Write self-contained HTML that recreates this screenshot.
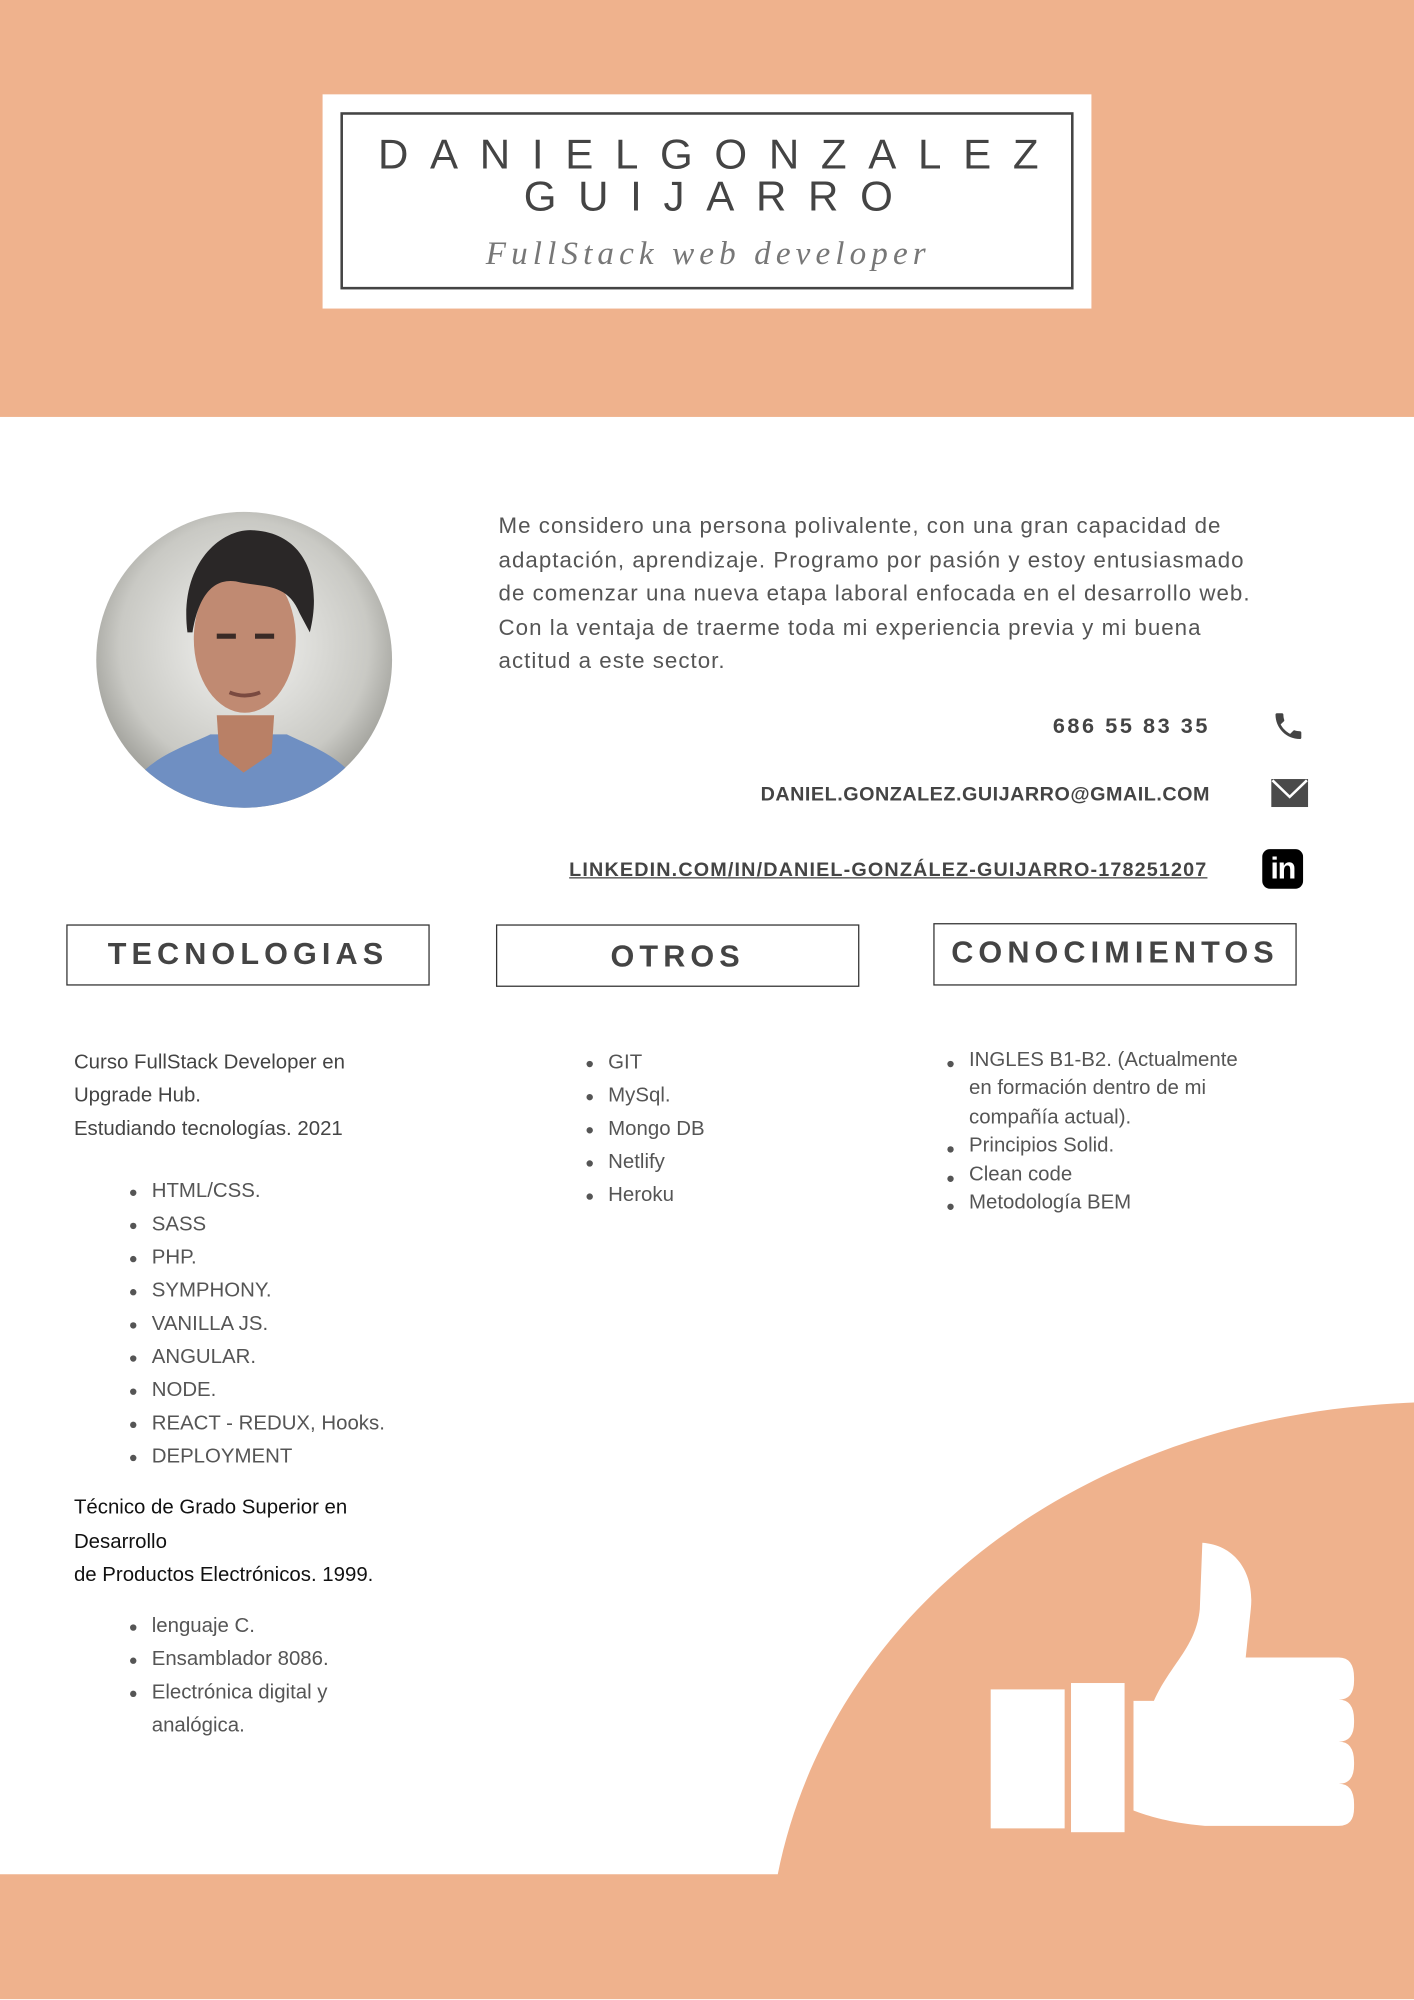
<!DOCTYPE html>
<html><head><meta charset="utf-8"><style>
html,body{margin:0;padding:0;background:#fff;}
body{width:1414px;height:2000px;overflow:hidden;position:relative;}
#s{position:absolute;left:0;top:0;width:1109px;height:1568px;transform:scale(1.27502);transform-origin:0 0;font-family:"Liberation Sans",sans-serif;color:#555;}
.a{position:absolute;}
.name{left:267px;width:577px;text-align:center;font-size:33px;letter-spacing:17px;color:#444;line-height:34px;padding-left:17px;box-sizing:border-box;}
.box{border:1.5px solid #333;box-sizing:border-box;text-align:center;font-weight:bold;font-size:24px;letter-spacing:4px;color:#444;line-height:46px;}
.t{font-size:16px;color:#444;line-height:26px;}
ul{margin:0;padding:0;list-style:none;}
li{position:relative;}
li:before{content:"";position:absolute;left:-17px;top:11px;width:5px;height:5px;border-radius:50%;background:#555;}
</style></head><body><div id="s">
<div class="a" style="left:0;top:0;width:1109px;height:327px;background:#EFB28D"></div>
<div class="a" style="left:253px;top:74px;width:603px;height:168px;background:#fff"></div>
<div class="a" style="left:267px;top:88px;width:575px;height:139px;border:2px solid #444;box-sizing:border-box"></div>
<div class="a name" style="top:104px">DANIELGONZALEZ</div>
<div class="a name" style="top:137px">GUIJARRO</div>
<div class="a" style="left:267px;width:577px;top:184px;text-align:center;font-family:'Liberation Serif',serif;font-style:italic;font-size:26px;letter-spacing:4px;color:#777">FullStack web developer</div>

<svg class="a" style="left:75px;top:401px" width="233" height="233" viewBox="0 0 233 233">
<defs><clipPath id="c"><circle cx="116.5" cy="116.5" r="116"/></clipPath>
<radialGradient id="g" cx="0.5" cy="0.45" r="0.6"><stop offset="0" stop-color="#f4f4f2"/><stop offset="0.7" stop-color="#c9c9c4"/><stop offset="1" stop-color="#8e8e88"/></radialGradient></defs>
<g clip-path="url(#c)">
<rect width="233" height="233" fill="url(#g)"/>
<path d="M20 233 C30 195 70 185 90 175 L150 175 C170 185 205 195 215 233 Z" fill="#6f8fc2"/>
<path d="M95 160 L140 160 L138 190 L116 205 L97 190 Z" fill="#b98066"/>
<ellipse cx="117" cy="100" rx="40" ry="58" fill="#c08a72"/>
<path d="M72 95 C65 40 100 12 125 15 C165 18 178 55 168 95 L160 80 C150 55 130 60 110 55 C90 52 80 70 76 95 Z" fill="#2a2727"/>
<path d="M95 98 l15 0 M125 98 l15 0" stroke="#3a2a26" stroke-width="4"/>
<path d="M105 142 q12 5 24 0" stroke="#7a4a40" stroke-width="3" fill="none"/>
</g></svg>

<div class="a" style="left:391px;top:399px;width:610px;font-size:17.5px;letter-spacing:0.8px;line-height:26.5px;color:#555">Me considero una persona polivalente, con una gran capacidad de adaptación, aprendizaje. Programo por pasión y estoy entusiasmado de comenzar una nueva etapa laboral enfocada en el desarrollo web. Con la ventaja de traerme toda mi experiencia previa y mi buena actitud a este sector.</div>

<div class="a" style="right:160px;top:560px;font-weight:bold;font-size:17px;letter-spacing:2px;color:#444">686 55 83 35</div>
<svg class="a" style="left:997px;top:556px" width="27" height="27" viewBox="0 0 24 24"><path d="M6.6 10.8c1.4 2.8 3.8 5.1 6.6 6.6l2.2-2.2c.3-.3.7-.4 1-.2 1.1.4 2.3.6 3.6.6.6 0 1 .4 1 1V20c0 .6-.4 1-1 1C10.6 21 3 13.4 3 4c0-.6.4-1 1-1h3.5c.6 0 1 .4 1 1 0 1.3.2 2.5.6 3.6.1.3 0 .7-.2 1z" fill="#444"/></svg>

<div class="a" style="right:160px;top:615px;font-weight:bold;font-size:15.5px;letter-spacing:0.4px;color:#444">DANIEL.GONZALEZ.GUIJARRO@GMAIL.COM</div>
<svg class="a" style="left:997px;top:611px" width="29" height="22" viewBox="0 0 29 22"><rect width="29" height="22" fill="#4a4a4a"/><path d="M1 1 L14.5 14 L28 1" stroke="#fff" stroke-width="2" fill="none"/></svg>

<div class="a" style="right:162px;top:674px;font-weight:bold;font-size:15.5px;letter-spacing:0.9px;color:#444;text-decoration:underline">LINKEDIN.COM/IN/DANIEL-GONZÁLEZ-GUIJARRO-178251207</div>
<div class="a" style="left:990px;top:666px;width:32px;height:31px;border-radius:6px;background:#000;color:#fff;font-weight:bold;font-size:24px;line-height:31px;text-align:center;letter-spacing:-1px">in</div>

<div class="a box" style="left:52px;top:725px;width:285px;height:48px">TECNOLOGIAS</div>
<div class="a box" style="left:389px;top:725px;width:285px;height:49px;line-height:50px">OTROS</div>
<div class="a box" style="left:732px;top:724px;width:285px;height:49px">CONOCIMIENTOS</div>

<div class="a t" style="left:58px;top:821px;width:260px">Curso FullStack Developer en Upgrade Hub.<br>Estudiando tecnologías. 2021</div>
<ul class="a t" style="left:119px;top:922px;color:#555">
<li>HTML/CSS.</li><li>SASS</li><li>PHP.</li><li>SYMPHONY.</li><li>VANILLA JS.</li><li>ANGULAR.</li><li>NODE.</li><li>REACT - REDUX, Hooks.</li><li>DEPLOYMENT</li></ul>
<div class="a t" style="left:58px;top:1170px;width:270px;color:#111;line-height:26.5px">Técnico de Grado Superior en Desarrollo<br>de Productos Electrónicos. 1999.</div>
<ul class="a t" style="left:119px;top:1263px;width:200px;color:#555">
<li>lenguaje C.</li><li>Ensamblador 8086.</li><li>Electrónica digital y analógica.</li></ul>

<ul class="a t" style="left:477px;top:821px;color:#555">
<li>GIT</li><li>MySql.</li><li>Mongo DB</li><li>Netlify</li><li>Heroku</li></ul>

<ul class="a t" style="left:760px;top:821px;width:232px;line-height:22.4px;color:#555">
<li>INGLES B1-B2. (Actualmente en formación dentro de mi compañía actual).</li><li>Principios Solid.</li><li>Clean code</li><li>Metodología BEM</li></ul>

<svg class="a" style="left:0;top:0" width="1109" height="1568" viewBox="0 0 1109 1568">
<path d="M0 1470 L610 1470 C650 1270 840 1110 1109 1100 L1109 1568 L0 1568 Z" fill="#EFB28D"/>
<rect x="777" y="1325" width="58" height="109" fill="#fff"/>
<rect x="840" y="1320" width="42" height="117" fill="#fff"/>
<path d="M889 1334 L905 1334 C918 1305 938 1292 941 1262 L943 1210 C970 1212 984 1235 981 1262 L977 1300 L1050 1300 Q1062 1300 1062 1316 L1062 1318 Q1062 1333 1050 1333 Q1062 1333 1062 1349 L1062 1351 Q1062 1366 1050 1366 Q1062 1366 1062 1382 L1062 1384 Q1062 1399 1050 1399 Q1062 1399 1062 1415 L1062 1418 Q1062 1432 1050 1432 L945 1432 C920 1430 902 1425 889 1420 Z" fill="#fff"/>
</svg>
</div></body></html>
